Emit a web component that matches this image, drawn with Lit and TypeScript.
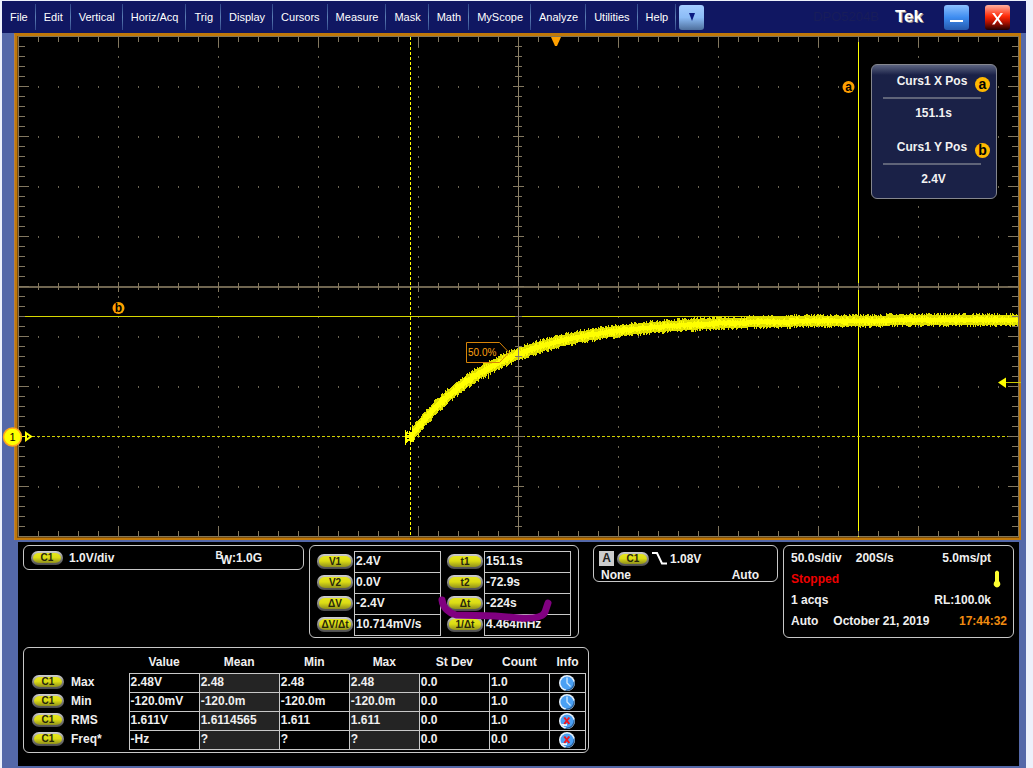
import { LitElement, html, css, svg, nothing } from "lit";
import { customElement, property } from "lit/decorators.js";

const MENUS = ["File", "Edit", "Vertical", "Horiz/Acq", "Trig", "Display", "Cursors", "Measure", "Mask", "Math", "MyScope", "Analyze", "Utilities", "Help"];

const CURSORS = [
  [["V1", "2.4V"], ["V2", "0.0V"], ["ΔV", "-2.4V"], ["ΔV/Δt", "10.714mV/s"]],
  [["t1", "151.1s"], ["t2", "-72.9s"], ["Δt", "-224s"], ["1/Δt", "4.464mHz"]],
];

const COLUMNS = ["Value", "Mean", "Min", "Max", "St Dev", "Count"];
const MEASUREMENTS = [
  { name: "Max", values: ["2.48V", "2.48", "2.48", "2.48", "0.0", "1.0"], ok: true },
  { name: "Min", values: ["-120.0mV", "-120.0m", "-120.0m", "-120.0m", "0.0", "1.0"], ok: true },
  { name: "RMS", values: ["1.611V", "1.6114565", "1.611", "1.611", "0.0", "1.0"], ok: false },
  { name: "Freq*", values: ["-Hz", "?", "?", "?", "0.0", "0.0"], ok: false },
];

// Graticule: 10 x 10 divisions, 100 units wide and 50 units tall each.
function graticule() {
  let ticks = "";
  let dots = "";
  for (let x = 38; x < 1018; x += 20) {
    const major = (x - 18) % 100 === 0;
    ticks += `M${x} 37h1v${major ? 10 : 5}h-1z M${x} 536h1v${major ? -10 : -5}h-1z M${x} ${major ? 282 : 283}h1v${major ? 10 : 7}h-1z`;
    for (let y = 87; y < 530; y += 50) if (y !== 287) dots += `M${x} ${y - 1}h1v2h-1z`;
  }
  for (let y = 46; y < 532; y += 10) {
    const major = (y - 36) % 50 === 0;
    const len = major ? 10 : 6;
    ticks += `M19 ${y}h${len}v1h-${len}z M1018 ${y}h-${len}v1h${len}z M${major ? 513 : 515} ${y}h${major ? 11 : 7}v1h-${major ? 11 : 7}z`;
    for (let x = 118; x < 1018; x += 100) if (x !== 518) dots += `M${x} ${y}h1v2h-1z`;
  }
  return { ticks, dots };
}

// RC charging curve with sampling noise, one vertical bar per column.
function trace() {
  let seed = 7;
  const rnd = () => {
    seed = (seed * 16807) % 2147483647;
    return seed / 2147483647;
  };
  let outer = "";
  let inner = "";
  for (let x = 412; x < 1018; x++) {
    const decay = Math.exp(-(x - 410) / 87.5);
    const y = 437 - 117 * (1 - decay);
    const noise = (base: number) => base + 2 * decay + (rnd() < 0.22 ? 2 : rnd() < 0.4 ? 1 : 0);
    const top = Math.round(y - noise(5));
    const bottom = Math.round(y + noise(5));
    outer += `M${x} ${top}h1V${bottom}h-1z`;
    const it = Math.round(y - noise(2));
    const ib = Math.round(y + noise(2));
    inner += `M${x} ${it}h1V${ib}h-1z`;
  }
  return { outer, inner };
}

const GRID = graticule();
const TRACE = trace();

@customElement("source-pill")
export class SourcePill extends LitElement {
  @property() label = "";
  static styles = css`
    :host { display: block; flex: none; width: 32px; }
    .pill {
      display: block; box-sizing: border-box; height: 14px; padding: 2px;
      border-radius: 7px; background: linear-gradient(#d2d2d2, #8c8c8c 45%, #4a4a4a);
    }
    .face {
      display: block; height: 10px; border-radius: 6px / 5px; text-align: center;
      font: bold 10px/10px "Liberation Sans", Arial, sans-serif; color: #26260c;
      background: linear-gradient(#e6e61e, #dcdc14 45%, #8f8f1c);
      white-space: nowrap;
    }
    :host([wide]) { width: 36px; }
    :host([wide]) .pill { height: 15px; }
    :host([wide]) .face { height: 11px; line-height: 11px; }
  `;
  render() {
    return html`<span class="pill"><span class="face">${this.label}</span></span>`;
  }
}

@customElement("menu-bar")
export class MenuBar extends LitElement {
  static styles = css`
    :host {
      display: flex; align-items: center; justify-content: space-between; height: 32px;
      background: #101762; color: #fff; font: 11px/16px "Liberation Sans", Arial, sans-serif;
    }
    .menus, .window { display: flex; align-items: center; }
    .menus { padding-left: 1px; }
    button { font: inherit; color: inherit; border: 0; margin: 0; padding: 0; background: none; }
    .item {
      height: 26px; padding: 0 7px 0 8px; border-right: 1px solid;
      border-image: linear-gradient(#2b3f86, #5b7fb4 50%, #2f4488) 1;
    }
    .item:first-child { padding-left: 7px; }
    .square { width: 25px; height: 25px; border-radius: 3px; display: grid; place-items: center; }
    .more { margin-left: 3px; background: linear-gradient(#a4ccff, #8cbcf6 50%, #4e6f9c); }
    .window { padding-right: 16px; gap: 16px; }
    .model { color: #181d5a; font-size: 13px; }
    .brand { font: bold 17px/20px "Liberation Sans", Arial, sans-serif; text-shadow: 1px 1px 0 #9a948c; margin-right: 5px; }
    .min { background: linear-gradient(#8cc0ff, #3d8cf0 50%, #2559ad); }
    .close { background: linear-gradient(#ffb0a0, #ff2a08 45%, #c01400 65%, #200000); }
  `;
  render() {
    return html`
      <nav class="menus">
        ${MENUS.map((m) => html`<button class="item">${m}</button>`)}
        <button class="square more" aria-label="More menus">
          <svg width="8" height="8" viewBox="0 0 8 8"><path d="M1 0H7L4 8z" fill="#0a1a80" /></svg>
        </button>
      </nav>
      <div class="window">
        <span class="model">DPO5204B</span>
        <span class="brand">Tek</span>
        <button class="square min" aria-label="Minimize">
          <svg width="25" height="25" viewBox="0 0 25 25"><path d="M6 15h13v2H6z" fill="#fff" /></svg>
        </button>
        <button class="square close" aria-label="Close">
          <svg width="25" height="25" viewBox="0 0 25 25"><path d="M7 8h2.500l3 4.200L15.500 8H18l-4.200 5.700L18 19.500h-2.500l-3-4.200L9.500 19.500H7l4.200-5.800z" fill="#fff" /></svg>
        </button>
      </div>
    `;
  }
}

@customElement("scope-screen")
export class ScopeScreen extends LitElement {
  static styles = css`
    :host { display: block; position: relative; font-family: "Liberation Sans", Arial, sans-serif; }
    .plot { display: block; width: 100%; height: auto; overflow: visible; }
    .tag { font-size: 10px; fill: #ffa010; }
    .mark { font-size: 12px; font-weight: bold; fill: #000; text-anchor: middle; }
    .channel { font-size: 11px; fill: #000; text-anchor: middle; }
    .readout {
      position: absolute; top: 31px; right: 29px; box-sizing: border-box; width: 126px; height: 135px;
      padding: 7px 12px 7px 11px; border: 1px solid #85878f; border-radius: 6px;
      background: linear-gradient(#5c6480, #1a2147 10px); color: #f2f2f2;
      font-weight: bold; font-size: 12px; text-align: center;
    }
    .name { position: relative; height: 27px; line-height: 18px; border-bottom: 2px solid #5f6479; box-sizing: border-box; margin-right: 3px; }
    .value { height: 39px; line-height: 28px; box-sizing: border-box; }
    .badge {
      position: absolute; right: -9px; top: 5px; width: 15px; height: 15px; border-radius: 50%;
      background: #ffb800; color: #000; font-size: 14px; line-height: 14px;
    }
  `;
  render() {
    return html`
      <svg class="plot" viewBox="2 33 1024 507" role="img" aria-label="Channel 1 waveform" shape-rendering="crispEdges">
        <rect x="14" y="33" width="1007" height="507" fill="#c07808" />
        <rect x="14" y="34" width="1" height="506" fill="#b98040" />
        <rect x="17" y="36" width="1002" height="502" fill="#7c4c08" />
        <rect x="18" y="36" width="1001" height="501" fill="#857656" />
        <rect x="19" y="37" width="999" height="499" fill="#000" />
        <path d=${GRID.dots} fill="#6b6554" />
        <path d="M19 286H1018V288H19z" fill="#6f6550" />
        <path d="M858 37h1v500h-1z" fill="#ffff00" />
        <path d="M19 316H1018V317H19z" fill="#d8d800" />
        <path d="M410.500 37V536" stroke="#ffff00" stroke-dasharray="3 2" />
        <path d="M32 436.500H1018" stroke="#d0d000" stroke-dasharray="3 2" />
        <path d=${TRACE.outer} fill="#e0e000" />
        <path d=${TRACE.inner} fill="#ffff00" />
        <path d="M405 430h1v2h1v-1h1v2h1v-2h1v2h1v-1h1v-2h2v12h-1v-1h-1v1h-2v-1h-2v1h-1v1h-1v2h-1z" fill="#ffff00" />
        <path d="M407 434h2v1h-2zM407 438h2v1h-2z" fill="#000" />
        <path d="M488 374h1v5h-1z" fill="#e0e000" />
        <path d="M518 37H519V536H518z" fill="#8d826b" />
        <path d=${GRID.ticks} fill="#82775f" />
        <g shape-rendering="auto">
          <path d="M551 37h10l-4 9h-2z" fill="#ffa000" />
          <path d="M466.500 342.500H499.500L509 352.500L499.500 362.500H466.500z" fill="none" stroke="#d88408" />
          <text class="tag" x="468" y="356">50.0%</text>
          <circle cx="848.500" cy="87" r="6" fill="#ffa000" />
          <text class="mark" x="848.500" y="91">a</text>
          <circle cx="118.500" cy="308" r="6" fill="#ffa000" />
          <text class="mark" x="118.500" y="312">b</text>
          <path d="M998 382.500L1006 377.500V388z" fill="#ffff00" />
          <path d="M1006 382.500H1021" stroke="#c8c800" />
          <path d="M22 436.500H27" stroke="#ffff00" stroke-width="1" />
          <path d="M26 433L31 436.500L26 440z" fill="#000" stroke="#ffff00" stroke-width="2" />
          <circle cx="12.500" cy="437" r="9" fill="#ffff00" stroke="#ffa51e" stroke-width="1.500" />
          <text class="channel" x="12.500" y="441">1</text>
        </g>
      </svg>
      <aside class="readout">
        <div class="name">Curs1 X Pos<span class="badge">a</span></div>
        <div class="value">151.1s</div>
        <div class="name">Curs1 Y Pos<span class="badge">b</span></div>
        <div class="value">2.4V</div>
      </aside>
    `;
  }
}

@customElement("readout-console")
export class ReadoutConsole extends LitElement {
  static styles = css`
    :host {
      display: block; box-sizing: border-box; background: #000; color: #f0f0f0; padding: 3px 5px;
      font: bold 12px/16px "Liberation Sans", Arial, sans-serif;
    }
    .top { display: grid; grid-template-columns: 281fr 270fr 194fr 231fr; gap: 5px; align-items: start; }
    .panel { box-sizing: border-box; border: 1px solid #c8c8c8; border-radius: 6px; }
    .channel { display: flex; align-items: center; height: 25px; padding: 0 7px; gap: 6px; }
    .bandwidth { margin: 0 34px 0 auto; }
    .raised { font-size: 10px; line-height: 1; vertical-align: 3px; }
    .lowered { line-height: 1; vertical-align: -2px; margin-left: -2px; }
    .cursors { position: relative; display: flex; gap: 6px; height: 93px; padding: 5px 7px; }
    table { border-collapse: collapse; table-layout: fixed; }
    th, td { padding: 0; font-weight: bold; white-space: nowrap; }
    .cursor-table { width: 124px; height: 85px; }
    .cursor-table th { width: 37px; padding-bottom: 2px; }
    .cursor-table td { height: 18px; border: 1px solid #c8c8c8; padding: 0 0 2px 1px; }
    .stroke { position: absolute; left: 127px; top: 46px; overflow: visible; }
    .trigger { margin-left: 9px; height: 37px; padding: 4px 5px; }
    .row { display: flex; align-items: center; height: 17px; }
    .source { gap: 3px; }
    .kind { width: 15px; height: 15px; line-height: 15px; background: #ccc; color: #222; text-align: center; }
    .modes { justify-content: space-between; padding: 0 13px 0 2px; height: 15px; }
    .horizontal { height: 93px; padding: 1px 6px 2px 7px; }
    .line { display: flex; align-items: center; justify-content: space-between; height: 21px; }
    .rates { display: flex; gap: 14px; }
    .date { display: flex; gap: 15px; }
    .inset { margin-right: 16px; }
    .thermo { margin-right: 6px; }
    .stopped { color: #f00000; }
    .clock { color: #f08c10; }
    .measure { width: min(566px, 100%); margin-top: 9px; padding: 3px 3px 3px 8px; height: 106px; }
    .results { width: 554px; }
    .results thead th { height: 22px; }
    .results tbody th { height: 16px; text-align: left; padding-bottom: 2px; }
    .results tbody td { height: 16px; line-height: 16px; border: 1px solid #c8c8c8; padding: 0 0 2px 1px; }
    .results tbody .shaded { background: #242424; }
    .results tbody .info { text-align: center; padding: 1px 0; }
    .info svg { display: block; margin: auto; }
    .label { display: flex; align-items: center; gap: 7px; }
    .c-name { width: 97px; } .c-70 { width: 70px; } .c-80 { width: 80px; } .c-60 { width: 60px; } .c-info { width: 36px; }
  `;

  private status(ok: boolean) {
    return html`<svg width="16" height="16" viewBox="0 0 16 16" role="img" aria-label=${ok ? "OK" : "Error"}>
      <circle cx="8" cy="8" r="8" fill="#e8f2fc" />
      <path d="M15.500 6A8 8 0 0 1 6 15.700z" fill="#285d96" />
      <circle cx="8" cy="8" r="6.500" fill="#4aa0f4" />
      ${ok
        ? svg`<path d="M8 2.500V8L11.500 11.500" fill="none" stroke="#d0e8ff" stroke-width="1.300" />`
        : svg`<path d="M2 11h6v2H4z" fill="#e8f2fc" /><path d="M5.300 4.500L10.300 11M10.300 4.500L5.300 11" stroke="#f01420" stroke-width="2" />`}
    </svg>`;
  }

  render() {
    return html`
      <div class="top">
        <section class="panel channel">
          <source-pill label="C1"></source-pill>
          <span>1.0V/div</span>
          <span class="bandwidth"><span class="raised">B</span><span class="lowered">W</span>:1.0G</span>
        </section>

        <section class="panel cursors">
          ${CURSORS.map(
            (group) => html`<table class="cursor-table">
              <tbody>
                ${group.map(([name, value]) => html`<tr><th scope="row"><source-pill wide label=${name}></source-pill></th><td>${value}</td></tr>`)}
              </tbody>
            </table>`,
          )}
          <svg class="stroke" width="120" height="34" viewBox="0 0 120 34" aria-hidden="true">
            <path d="M5 8C6 16 12 21 19 23L58 24L82 26C98 27 106 25 108 20L111 11" fill="none" stroke="#800080" stroke-width="7" stroke-linecap="round" stroke-linejoin="round" />
          </svg>
        </section>

        <section class="panel trigger">
          <div class="row source">
            <span class="kind">A</span>
            <source-pill label="C1"></source-pill>
            <svg width="15" height="15" viewBox="0 0 15 15" role="img" aria-label="Falling edge"><path d="M0 2H5L10 12.500H15" fill="none" stroke="#fff" stroke-width="2" /></svg>
            <span>1.08V</span>
          </div>
          <div class="row modes"><span>None</span><span>Auto</span></div>
        </section>

        <section class="panel horizontal">
          <div class="line"><span class="rates"><span>50.0s/div</span><span>200S/s</span></span><span class="inset">5.0ms/pt</span></div>
          <div class="line">
            <span class="stopped">Stopped</span>
            <svg class="thermo" width="8" height="18" viewBox="0 0 8 18" role="img" aria-label="Temperature"><path d="M2 2Q4 -1 6 2V11Q8 13 7 15.500Q4 19.500 1 15.500Q0 13 2 11z" fill="#ffff30" /></svg>
          </div>
          <div class="line"><span>1 acqs</span><span class="inset">RL:100.0k</span></div>
          <div class="line"><span class="date"><span>Auto</span><span>October 21, 2019</span></span><span class="clock">17:44:32</span></div>
        </section>
      </div>

      <section class="panel measure">
        <table class="results">
          <colgroup>
            <col class="c-name" /><col class="c-70" /><col class="c-80" /><col class="c-70" /><col class="c-70" /><col class="c-70" /><col class="c-60" /><col class="c-info" />
          </colgroup>
          <thead>
            <tr><th></th>${COLUMNS.map((c) => html`<th scope="col">${c}</th>`)}<th scope="col">Info</th></tr>
          </thead>
          <tbody>
            ${MEASUREMENTS.map(
              (m) => html`<tr>
                <th scope="row"><span class="label"><source-pill label="C1"></source-pill>${m.name}</span></th>
                ${m.values.map((v, i) => html`<td class=${i === 1 || i === 3 ? "shaded" : nothing}>${v}</td>`)}
                <td class="info">${this.status(m.ok)}</td>
              </tr>`,
            )}
          </tbody>
        </table>
      </section>
    `;
  }
}

@customElement("app-root")
export class AppRoot extends LitElement {
  static styles = css`
    :host { display: flex; box-sizing: border-box; min-height: 100vh; padding: 1px 7px 0 2px; background: #edf1fb; }
    .frame { flex: 1; min-width: 0; display: flex; flex-direction: column; background: #5468a8; }
    .console { flex: 1; margin: 2px 7px 2px 16px; }
  `;
  render() {
    return html`<main class="frame">
      <menu-bar></menu-bar>
      <scope-screen></scope-screen>
      <readout-console class="console"></readout-console>
    </main>`;
  }
}
